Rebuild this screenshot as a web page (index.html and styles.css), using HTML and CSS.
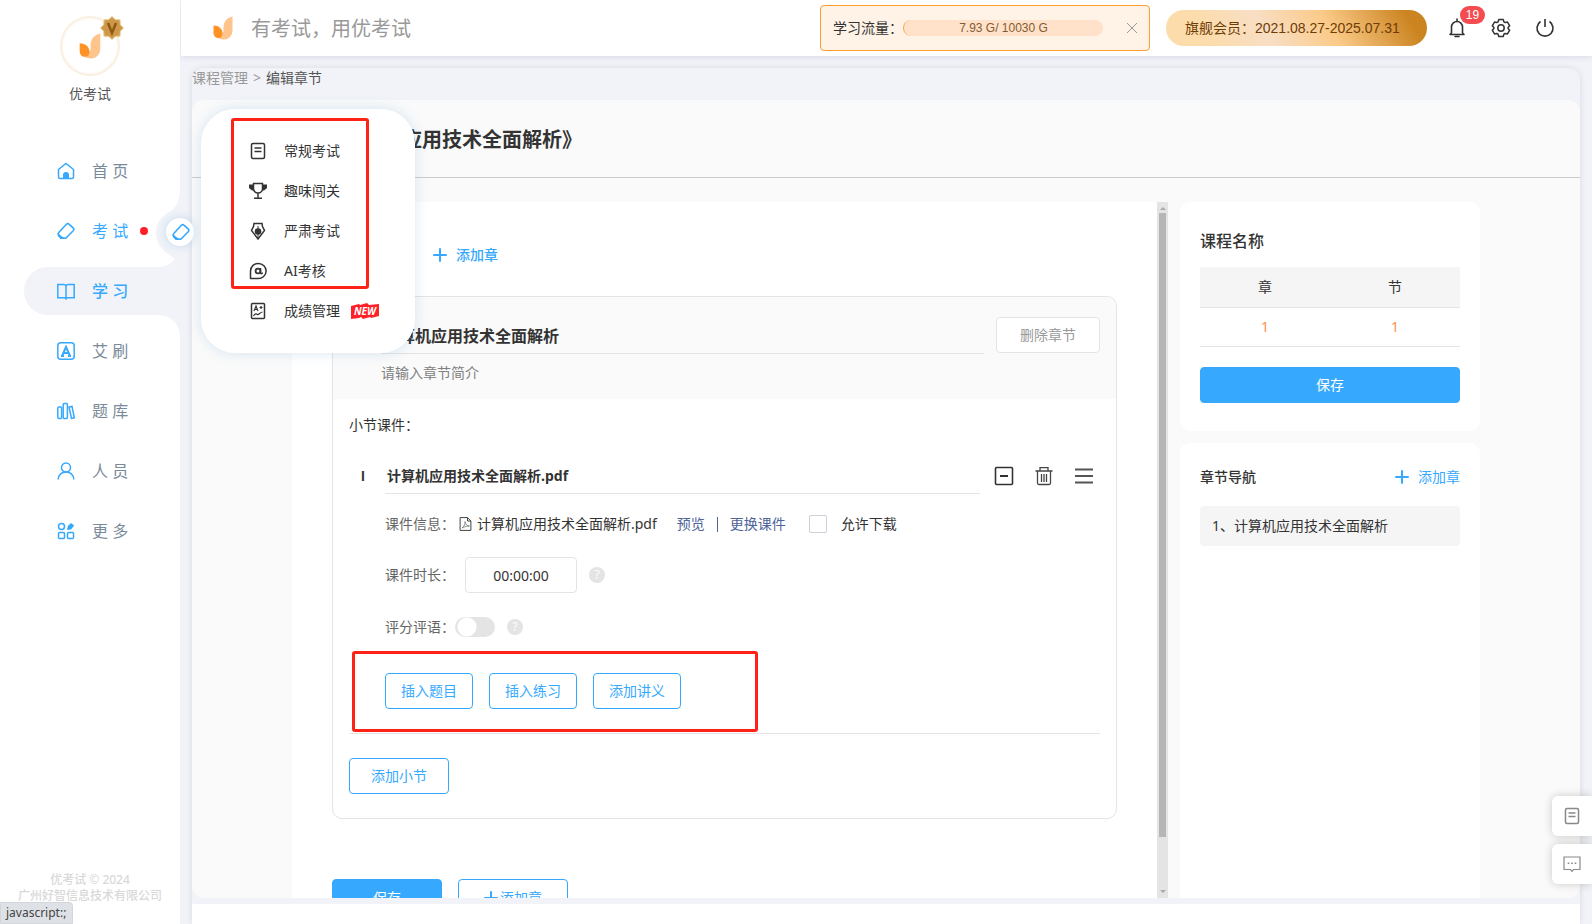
FILE: index.html
```html
<!DOCTYPE html>
<html lang="zh-CN">
<head>
<meta charset="utf-8">
<title>编辑章节</title>
<link rel="stylesheet" href="styles.css">
</head>
<body>
<svg class="defs" aria-hidden="true">
  <symbol id="eraser" viewBox="0 0 18 18"><path d="M2 10.200 9.400 2.300a2 2 0 0 1 2.800 0l3.900 3.600a2 2 0 0 1 .1 2.800L8.800 16.300H4.200L2 14a2.700 2.700 0 0 1 0-3.800z" fill="none" stroke="currentColor" stroke-width="1.600"/><path d="M1.200 10.800c2 3 4.500 4.500 7.800 5.500l-1 .8H4L1.200 14.200z" fill="currentColor"/></symbol>
  <symbol id="flame" viewBox="0 0 20 24"><path d="M19.500 .5V15a8.500 8.500 0 0 1-9 8.500c-3 0-5-1-6-2.500l6-5v-3.500C10.500 6 13 2 19.500 .5z" fill="#ffc38c"/><path d="M.5 9.500c5.500 0 9 3.500 9 8 0 2.500-1.500 4.500-4 4.500-3.500 0-5-2.500-5-5.500z" fill="#ff9224"/></symbol>
  <symbol id="plus" viewBox="0 0 14 14"><path d="M7 1v12M1 7h12" stroke="currentColor" stroke-width="2" stroke-linecap="round"/></symbol>
  <symbol id="doc" viewBox="0 0 18 18"><rect x="2.500" y="1.500" width="13" height="15" rx="1.500" fill="none" stroke="currentColor" stroke-width="1.500"/><path d="M5.500 6h7M5.500 9.500h7" stroke="currentColor" stroke-width="1.500"/></symbol>
</svg>
<div class="app">
  <aside class="sidebar">
    <svg class="edge" viewBox="0 0 24 154" aria-hidden="true"><path d="M24 0c0 16-4 22-12 27C4 32 0 38 0 46c0 9 4 17 12 22l7 5c-5 6-10 8-17 8h22zM2 129c13 0 22 9 22 22v-22z"/></svg>
    <div class="profile">
      <div class="avatar">
        <svg class="avatar-logo"><use href="#flame"/></svg>
        <svg class="vip" viewBox="0 0 24 24"><path d="m12 .5 3.300 3.100L20 3.800l.3 4.900 3.200 3.300-3.200 3.300-.3 4.900-4.700.2L12 23.500l-3.300-3.100-4.700-.2-.3-4.900L.5 12l3.200-3.300.3-4.900 4.700-.2z" fill="#cf9848" stroke="#e8cd98"/><path d="m8 7 4 10 4-10" fill="none" stroke="#8f5a14" stroke-width="2.500"/></svg>
      </div>
      <span>优考试</span>
    </div>
    <nav class="nav">
      <a href="#"><svg viewBox="0 0 18 18"><path d="M1.500 7.500 9 1.500l7.500 6V15a1.500 1.500 0 0 1-1.500 1.500H3A1.500 1.500 0 0 1 1.500 15z" fill="none" stroke="currentColor" stroke-width="1.500"/><path d="M6 17v-4a3 3 0 0 1 6 0v4z" fill="currentColor"/></svg><span>首 页</span></a>
      <a href="#" class="hot"><svg><use href="#eraser"/></svg><span>考 试</span><i class="dot"></i></a>
      <a href="#" class="active"><svg viewBox="0 0 18 18"><path d="M.8 2.500h5.700A2.500 2.500 0 0 1 9 4v12.500l-1.500-.8H.8zM17.200 2.500h-5.700A2.500 2.500 0 0 0 9 4v12.500l1.500-.8h6.700z" fill="none" stroke="currentColor" stroke-width="1.500"/></svg><span>学 习</span></a>
      <a href="#"><svg viewBox="0 0 18 18"><rect x=".8" y=".8" width="16.400" height="16.400" rx="3" fill="none" stroke="currentColor" stroke-width="1.500"/><path d="M5 14 9 5l4 9M6 11h6M4 14h3M11 14h3" fill="none" stroke="currentColor" stroke-width="2"/></svg><span>艾 刷</span></a>
      <a href="#"><svg viewBox="0 0 18 18"><g fill="none" stroke="currentColor" stroke-width="1.500"><rect x=".8" y="5" width="3.800" height="11.500" rx="1"/><rect x="6.200" y="1.500" width="4.200" height="15" rx="1"/><path d="m12 5 3-.6 2.300 11.400-2.800.6z"/></g></svg><span>题 库</span></a>
      <a href="#"><svg viewBox="0 0 18 18"><g fill="none" stroke="currentColor" stroke-width="1.500"><circle cx="9" cy="5.500" r="4.500"/><path d="M1.200 17.500c0-10 15.600-10 15.600 0"/></g></svg><span>人 员</span></a>
      <a href="#"><svg viewBox="0 0 18 18"><g fill="none" stroke="currentColor" stroke-width="1.500"><circle cx="4.500" cy="4.500" r="3"/><rect x="1.500" y="10.500" width="6" height="6" rx="1"/><rect x="10.500" y="10.500" width="6" height="6" rx="1"/></g><path d="m10 8 .8-4L14 1l3.200 2.500-3.200 4z" fill="currentColor"/></svg><span>更 多</span></a>
    </nav>
    <div class="copyright">优考试 © 2024<br>广州好智信息技术有限公司</div>
  </aside>

  <div class="main">
    <header class="topbar">
      <svg class="brand"><use href="#flame"/></svg>
      <span class="slogan">有考试，用优考试</span>
      <div class="traffic">
        <span>学习流量：</span>
        <div class="meter">7.93 G/ 10030 G</div>
        <button class="close" aria-label="关闭"><svg viewBox="0 0 10 10"><path d="m0 0 10 10M10 0 0 10" stroke="#999"/></svg></button>
      </div>
      <div class="member">旗舰会员：2021.08.27-2025.07.31</div>
      <div class="tools">
        <button aria-label="通知"><svg viewBox="0 0 20 20"><path d="M10 1v2M4.500 15V9a5.500 5.500 0 0 1 11 0v6l1.500 1.500H3zM8 18.500h4" fill="none" stroke="currentColor" stroke-width="1.600" stroke-linecap="round" stroke-linejoin="round"/></svg><span class="count">19</span></button>
        <button aria-label="设置"><svg viewBox="0 0 20 20"><path d="m7.800 1.500h4.400l.7 2.300 1.300.8 2.300-.5 2.200 3.700-1.600 1.800v.8l1.600 1.800-2.200 3.700-2.300-.5-1.300.8-.7 2.300H7.800l-.7-2.300-1.300-.8-2.300.5-2.200-3.700 1.600-1.800v-.8L1.300 7.800l2.200-3.700 2.300.5 1.300-.8z" fill="none" stroke="currentColor" stroke-width="1.500" stroke-linejoin="round"/><circle cx="10" cy="10" r="3.200" fill="none" stroke="currentColor" stroke-width="1.500"/></svg></button>
        <button aria-label="退出"><svg viewBox="0 0 20 20"><path d="M10 1v8M5.500 3.500a8 8 0 1 0 9 0" fill="none" stroke="currentColor" stroke-width="1.600"/></svg></button>
      </div>
    </header>

    <div class="content">
      <main class="panel">
        <div class="crumbs"><a href="#">课程管理</a><span>&gt;</span><b>编辑章节</b></div>
        <div class="work">
          <h1>《计算机应用技术全面解析》</h1>
          <div class="columns">
            <section class="editor">
              <div class="editor-body">
                <div class="toolbar"><button class="link strong"><svg><use href="#plus"/></svg>添加章</button></div>
                <div class="chapter">
                  <div class="chapter-head">
                    <div class="fields">
                      <input class="chapter-name" aria-label="章节名称" value="计算机应用技术全面解析">
                      <input class="chapter-intro" aria-label="章节简介" placeholder="请输入章节简介">
                    </div>
                    <button class="btn grey">删除章节</button>
                  </div>
                  <div class="chapter-body">
                    <div class="caption">小节课件：</div>
                    <div class="lesson">
                      <div class="lesson-head">
                        <span class="index">I</span>
                        <input class="lesson-name" aria-label="小节名称" value="计算机应用技术全面解析.pdf">
                        <div class="lesson-tools">
                          <button aria-label="收起"><svg viewBox="0 0 20 20"><rect x="1.500" y="1.500" width="17" height="17" rx="1" fill="none" stroke="#333" stroke-width="1.600"/><path d="M6 10h8" stroke="#333" stroke-width="2"/></svg></button>
                          <button aria-label="删除"><svg viewBox="0 0 20 20"><path d="M1.500 5h17M6 5V1.700h8V5M3.500 5v12a1.500 1.500 0 0 0 1.500 1.500h10a1.500 1.500 0 0 0 1.500-1.500V5M7.500 8v8M10 8v8M12.500 8v8" fill="none" stroke="#444" stroke-width="1.300"/></svg></button>
                          <button aria-label="排序"><svg viewBox="0 0 20 20"><path d="M1 3.500h18M1 10h18M1 16.500h18" stroke="#555" stroke-width="2"/></svg></button>
                        </div>
                      </div>
                      <div class="row">
                        <span class="label">课件信息：</span>
                        <svg class="pdf" viewBox="0 0 12 14"><path d="M.6.600h7.400L11.400 4v9.400H.6zM8 .6V4h3.400" fill="none" stroke="#444"/><path d="M2.500 11c2-1 3.200-4 3-6.500C6 7.500 7.500 9 10 9c-3 0-5 .8-7.500 2z" fill="none" stroke="#666" stroke-width=".7"/></svg>
                        <span class="filename">计算机应用技术全面解析.pdf</span>
                        <a href="#">预览</a><span class="bar"></span><a href="#">更换课件</a>
                        <label class="allow"><input type="checkbox">允许下载</label>
                      </div>
                      <div class="row">
                        <label class="label" for="duration">课件时长：</label>
                        <input id="duration" class="duration" value="00:00:00">
                        <span class="help">?</span>
                      </div>
                      <div class="row">
                        <label class="label" for="score">评分评语：</label>
                        <input id="score" class="switch" type="checkbox">
                        <span class="help">?</span>
                      </div>
                      <div class="inserts">
                        <button class="btn">插入题目</button>
                        <button class="btn">插入练习</button>
                        <button class="btn">添加讲义</button>
                        <div class="mark"></div>
                      </div>
                    </div>
                    <button class="btn add-lesson">添加小节</button>
                  </div>
                </div>
                <div class="actions">
                  <button class="btn primary">保存</button>
                  <button class="btn"><svg><use href="#plus"/></svg>添加章</button>
                </div>
              </div>
              <div class="scroll" aria-hidden="true"><i class="up"></i><i class="thumb"></i><i class="down"></i></div>
            </section>

            <aside class="side">
              <section class="card">
                <h2>课程名称</h2>
                <table>
                  <thead><tr><th>章</th><th>节</th></tr></thead>
                  <tbody><tr><td>1</td><td>1</td></tr></tbody>
                </table>
                <button class="btn primary">保存</button>
              </section>
              <section class="card outline">
                <div class="outline-head"><h3>章节导航</h3><button class="link"><svg><use href="#plus"/></svg>添加章</button></div>
                <a class="outline-item" href="#">1、计算机应用技术全面解析</a>
              </section>
            </aside>
          </div>
        </div>
        <div class="foot"></div>
      </main>
    </div>
  </div>
</div>

<div class="bubble"><svg><use href="#eraser"/></svg></div>
<div class="popup">
  <a href="#"><svg><use href="#doc"/></svg>常规考试</a>
  <a href="#"><svg viewBox="0 0 18 18"><path d="M4.500 1.500h9v5a4.500 4.500 0 0 1-9 0zM9 11v5M5 16.300h8" fill="none" stroke="currentColor" stroke-width="1.500"/><path d="M4.500 2.500H0V6l3 2.500h2zM13.500 2.500H18V6l-3 2.500h-2z" fill="currentColor"/></svg>趣味闯关</a>
  <a href="#"><svg viewBox="0 0 18 18"><path d="M5 1.500h8l.5 3 2 4L9 17 2.500 8.500l2-4z" fill="none" stroke="currentColor" stroke-width="1.500"/><circle cx="9" cy="9.500" r="3.300" fill="currentColor"/><path d="M9 4v13" stroke="currentColor"/></svg>严肃考试</a>
  <a href="#"><svg viewBox="0 0 18 18"><path d="M1.500 16.500V9A7.800 7.500 0 1 1 9 16.500z" fill="none" stroke="currentColor" stroke-width="1.500" stroke-linejoin="round"/><path d="M11.500 6v4.500c0 1.500 1.800 1.500 1.800 0" fill="none" stroke="currentColor" stroke-width="1.500"/><circle cx="9" cy="9" r="2.400" fill="none" stroke="currentColor" stroke-width="1.800"/></svg>AI考核</a>
  <a href="#"><svg viewBox="0 0 18 18"><rect x="2.500" y="1.500" width="13" height="15" rx="1" fill="none" stroke="currentColor" stroke-width="1.500"/><path d="m5 9 2-5 2 5M5.700 7.500h2.600M10.500 5.500h3M12 4v3M4.500 14c1.500-2.500 3-2.500 4-1.500s3-2.500 5-2.500" fill="none" stroke="currentColor" stroke-width="1.200"/></svg>成绩管理<svg class="new" viewBox="0 0 28 16"><path d="m0 3 8-2 1 1 7-2 2 2 10-1v12l-8 2-1-1-7 2-2-2-2 1-8 1z" fill="#ff2028"/><text x="14" y="12">NEW</text></svg></a>
  <div class="mark"></div>
</div>
<div class="floaters">
  <button aria-label="记录"><svg><use href="#doc"/></svg></button>
  <button aria-label="反馈"><svg viewBox="0 0 18 18"><path d="M1 2h16v12.500h-6.500L9 16.300l-1.500-1.800H1z" fill="none" stroke="currentColor" stroke-width="1.200"/><path d="M4.700 8.300h1.600M8.200 8.300h1.600M11.700 8.300h1.600" stroke="currentColor" stroke-width="1.500"/></svg></button>
</div>
<div class="status">javascript:;</div>
</body>
</html>
```

FILE: styles.css
```css
* { box-sizing: border-box; }
body {
  margin: 0;
  font: 14px/20px "Noto Sans", "Noto Sans CJK SC", sans-serif;
  color: #333;
  background: #f1f3f8;
}
.defs { position: absolute; width: 0; height: 0; }
a { color: inherit; text-decoration: none; }
button, input { font: inherit; color: inherit; }
button { padding: 0; border: 0; background: none; }
input { min-width: 0; margin: 0; padding: 0; border: 0; outline: 0; background: none; }
h1, h2, h3 { margin: 0; }
svg { flex: none; display: block; width: 18px; height: 18px; }

.app { display: flex; height: 100vh; }

/* Sidebar */
.sidebar {
  position: relative;
  flex: none;
  display: flex;
  flex-direction: column;
  width: 180px;
  background: #fff;
}
.edge { position: absolute; top: 186px; right: 0; width: 24px; height: 154px; fill: #f1f3f8; }
.profile {
  display: flex;
  flex-direction: column;
  align-items: center;
  gap: 8px;
  padding: 16px 0 43px;
  color: #555;
}
.avatar {
  position: relative;
  display: grid;
  place-items: center;
  width: 60px;
  height: 60px;
  border: 2px solid #faf0e1;
  border-radius: 50%;
  box-shadow: inset 0 0 0 1px #fdf8f0;
}
.avatar-logo { width: 22px; height: 26px; }
.vip { position: absolute; top: -2px; right: -6px; width: 24px; height: 24px; }
.nav { position: relative; font-size: 16px; color: #7b8a9a; }
.nav a { display: flex; align-items: center; gap: 17px; height: 48px; margin: 0 0 12px 24px; padding-left: 33px; }
.nav svg { color: #36a9ff; }
.nav .hot, .nav .active { color: #36a9ff; }
.nav .active { background: #f1f3f8; border-radius: 24px 0 0 24px; font-weight: 500; }
.dot { width: 8px; height: 8px; margin-left: -5px; border-radius: 50%; background: #ff1e28; }
.copyright {
  margin-top: auto;
  padding-bottom: 20px;
  font-size: 12px;
  line-height: 16px;
  font-weight: 500;
  text-align: center;
  color: #d9d9d9;
}

/* Top bar */
.main { flex: 1; display: flex; flex-direction: column; min-width: 0; }
.topbar {
  flex: none;
  display: flex;
  align-items: center;
  height: 56px;
  margin-left: 1px;
  padding: 0 37px 0 32px;
  background: #fff;
  box-shadow: 0 1px 6px rgba(40, 50, 90, .12);
}
.brand { width: 20px; height: 24px; }
.slogan { margin: 0 auto 0 18px; padding-top: 2px; font-size: 20px; color: #999; }
.traffic {
  display: flex;
  align-items: center;
  width: 330px;
  height: 46px;
  padding: 0 12px;
  border: 1px solid #ff9c33;
  border-radius: 4px;
  background: #fff2e6;
}
.meter {
  width: 200px;
  border-left: 1px solid #ffa74d;
  border-radius: 8px;
  background: #ffe2c9;
  font: 12px/16px "Liberation Sans", Arial, sans-serif;
  text-align: center;
  color: #865b33;
}
.close { margin-left: auto; }
.close svg { width: 10px; height: 10px; }
.member {
  width: 261px;
  height: 36px;
  margin: 0 20px 0 16px;
  padding-left: 19px;
  border-radius: 18px;
  background: linear-gradient(60deg, #fcdcaa 0%, #fcdcaa 15%, #f8dec4 38%, #fbca88 62%, #cb8420 92%);
  font: 14px/36px "Liberation Sans", "Noto Sans CJK SC", sans-serif;
  color: #6f3c06;
}
.tools { display: flex; gap: 24px; }
.tools button { position: relative; }
.tools svg { width: 20px; height: 20px; }
.count {
  position: absolute;
  top: -12px;
  left: 13px;
  width: 25px;
  border-radius: 9px;
  background: #f44c50;
  font: 12px/18px "Liberation Sans", Arial, sans-serif;
  color: #fff;
}

/* Page panel */
.content { flex: 1; min-height: 0; padding: 12px 12px 0; }
.panel {
  display: flex;
  flex-direction: column;
  height: 100%;
  border-radius: 12px 12px 0 0;
  background: #f1f3f8;
  box-shadow: 0 0 6px rgba(40, 50, 90, .12);
}
.crumbs { flex: none; display: flex; gap: 5px; height: 32px; color: #999; }
.crumbs b { font-weight: 400; color: #555; }
.work {
  flex: 1;
  display: flex;
  flex-direction: column;
  min-height: 0;
  border-radius: 12px;
  background: #fafafa;
}
.work h1 {
  flex: none;
  padding: 25px 130px 23px;
  border-bottom: 1px solid #ccc;
  font-size: 20px;
  line-height: 29px;
}
.columns { flex: 1; display: flex; gap: 12px; min-height: 0; padding: 24px 100px 0; }
.foot { flex: none; height: 20px; margin-top: 6px; background: #fff; }

/* Editor */
.editor { flex: 1; display: flex; min-width: 0; overflow: hidden; background: #fff; }
.editor-body { flex: 1; min-width: 0; padding: 0 40px; }
.scroll { display: flex; flex-direction: column; align-items: center; width: 11px; padding: 5px 0; background: #e4e4e4; }
.up, .down { border: 3px solid transparent; }
.up { border-top: 0; border-bottom-color: #aaa; }
.down { margin-top: auto; border-bottom: 0; border-top-color: #aaa; }
.thumb { width: 7px; height: 91%; margin-top: 3px; background: #b6b6b6; }
.toolbar { display: flex; height: 94px; padding: 12px 0 0 101px; }
.link { display: flex; align-items: center; gap: 9px; color: #36a9ff; }
.link svg, .btn svg { width: 14px; height: 14px; }
.strong { font-weight: 500; }
.btn {
  display: flex;
  align-items: center;
  justify-content: center;
  gap: 2px;
  height: 36px;
  padding: 0 15px;
  border: 1px solid #36a9ff;
  border-radius: 4px;
  background: #fff;
  color: #36a9ff;
}
.primary { background: #36a9ff; color: #fff; }
.grey { width: 104px; border-color: #e4e4e4; color: #999; }
.chapter { overflow: hidden; border: 1px solid #e4e4e4; border-radius: 10px; }
.chapter-head { display: flex; gap: 12px; padding: 20px 16px 9px 48px; background: #fafafa; }
.fields { flex: 1; display: flex; flex-direction: column; }
.fields input { height: 36px; }
.fields .chapter-name { height: 37px; padding-left: 2px; border-bottom: 1px solid #e4e4e4; font-size: 16px; font-weight: 700; }
.chapter-intro::placeholder { color: #808080; }
.chapter-body { padding: 16px 16px 24px; }
.lesson { margin-top: 22px; padding: 0 0 24px 36px; border-bottom: 1px solid #e4e4e4; }
.lesson-head { display: flex; align-items: center; margin-left: -36px; padding-right: 6px; }
.index { width: 36px; padding-left: 12px; font-family: "Liberation Sans", Arial, sans-serif; font-weight: 700; }
.lesson-name { flex: 1; height: 37px; padding-left: 2px; border-bottom: 1px solid #e4e4e4; font-weight: 700; }
.lesson-tools { display: flex; gap: 20px; margin-left: 14px; }
.lesson-tools svg { width: 20px; height: 20px; }
.row { display: flex; align-items: center; height: 36px; margin-top: 16px; }
.row:nth-child(2) { margin-top: 12px; }
.row:nth-child(3) { margin-top: 15px; }
.label { width: 70px; color: #666; }
.pdf { width: 13px; height: 14px; margin: 0 5px 0 4px; }
.filename { margin-right: 20px; }
.row a { color: #4d6399; }
.bar { width: 1px; height: 15px; margin: 0 12px; background: #4d6399; }
.allow { display: flex; align-items: center; gap: 14px; margin-left: 23px; }
.allow input { appearance: none; width: 18px; height: 18px; border: 1px solid #ccd0d8; border-radius: 2px; background: #fff; }
.duration { width: 112px; height: 36px; margin-left: 10px; border: 1px solid #e4e4e4; border-radius: 4px; text-align: center; }
.help { width: 16px; margin-left: 12px; border-radius: 50%; background: #e4e4e4; font-size: 12px; line-height: 16px; text-align: center; color: #fff; }
.switch { appearance: none; width: 40px; height: 20px; border-radius: 10px; background: radial-gradient(circle at 12px 10px, #fff 9px, #e4e4e4 10px); }
.inserts { position: relative; display: flex; gap: 16px; margin-top: 28px; }
.mark { position: absolute; border: 3px solid #ff2317; border-radius: 3px; }
.inserts .mark { top: -22px; left: -33px; width: 406px; height: 81px; }
.add-lesson { width: 100px; margin-top: 24px; }
.actions { display: flex; gap: 16px; margin-top: 60px; }
.actions .btn { width: 110px; padding-top: 2px; }

/* Right column */
.side { flex: none; display: flex; flex-direction: column; gap: 12px; width: 300px; }
.card { padding: 27px 20px 28px; border-radius: 10px; background: #fff; }
.card h2 { font-size: 16px; line-height: 24px; font-weight: 500; }
.card table { width: 100%; margin: 14px 0 20px; border-collapse: collapse; table-layout: fixed; }
.card th, .card td { height: 40px; padding: 0; border-bottom: 1px solid #e4e4e4; text-align: center; font-weight: 400; }
.card th { background: #f5f5f5; }
.card td { height: 39px; color: #ff8f4d; }
.card .btn { width: 100%; }
.outline { flex: 1; padding-top: 24px; border-radius: 10px 10px 0 0; }
.outline-head { display: flex; justify-content: space-between; margin-bottom: 19px; }
.outline h3 { font-size: 14px; font-weight: 500; }
.outline-item { display: block; padding: 10px 12px; border-radius: 4px; background: #f5f5f5; }

/* Overlays */
.bubble {
  position: absolute;
  top: 218px;
  left: 166px;
  display: grid;
  place-items: center;
  width: 28px;
  height: 28px;
  padding-left: 2px;
  border-radius: 50%;
  background: #fff;
  box-shadow: 0 0 10px rgba(60, 140, 200, .25);
  color: #36a9ff;
}
.popup {
  position: absolute;
  top: 109px;
  left: 201px;
  width: 214px;
  padding: 22px 0 22px 48px;
  border-radius: 34px;
  background: #fff;
  box-shadow: 0 0 14px rgba(60, 140, 200, .2);
}
.popup a { display: flex; align-items: center; gap: 17px; height: 40px; }
.popup .new { width: 28px; height: 16px; margin-left: -6px; }
.new text { fill: #fff; font: italic 700 10px "Noto Sans", sans-serif; text-anchor: middle; }
.popup .mark { top: 9px; left: 30px; width: 138px; height: 171px; }
.floaters { position: absolute; right: 0; bottom: 40px; display: flex; flex-direction: column; gap: 8px; }
.floaters button {
  display: grid;
  place-items: center;
  width: 40px;
  height: 40px;
  border-radius: 6px 0 0 6px;
  background: #fff;
  box-shadow: 0 0 10px rgba(0, 0, 0, .2);
  color: #888;
}
.status {
  position: absolute;
  bottom: 0;
  left: 0;
  padding: 0 6px 0 5px;
  border: 1px solid #d3d6db;
  border-radius: 0 4px 0 0;
  background: #dee1e6;
  font-size: 12px;
  color: #444;
}
```
